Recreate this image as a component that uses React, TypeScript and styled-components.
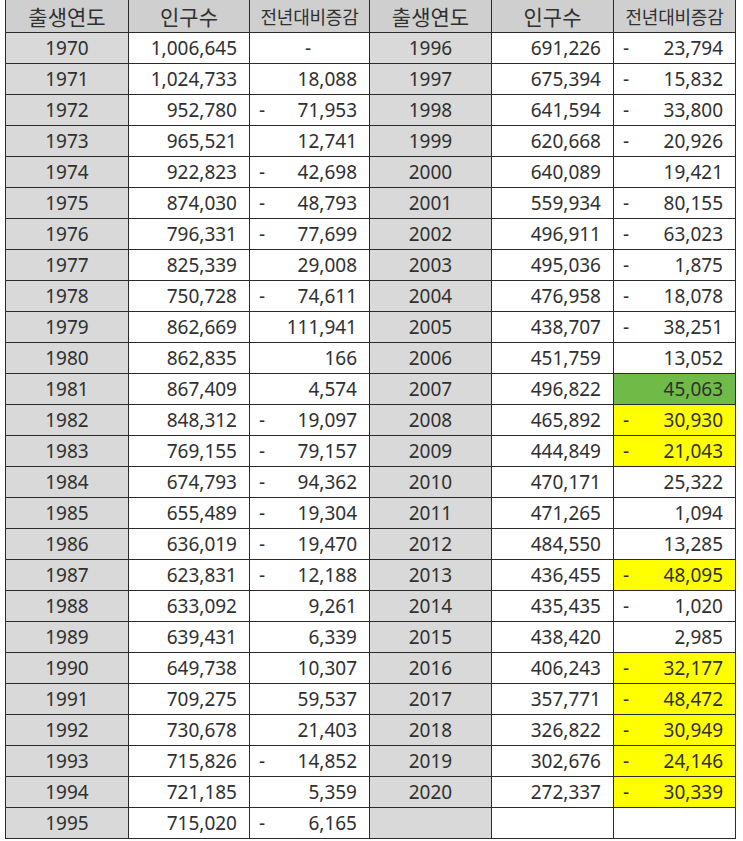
import React from 'react';
import styled, { createGlobalStyle } from 'styled-components';

const GlobalStyle = createGlobalStyle`
  html, body {
    margin: 0;
    padding: 0;
    background: #ffffff;
  }
  body {
    font-family: "Noto Sans", "Noto Sans CJK KR", sans-serif;
    color: #333333;
  }
`;

type Tone = 'none' | 'green' | 'yellow';

type Row = {
  year: number | null;
  pop: string;
  diff: string;
  neg?: boolean;
  tone?: Tone;
  center?: boolean;
};

const r = (year: number | null, pop: string, diff: string, extra: Partial<Row> = {}): Row => ({
  year,
  pop,
  diff: diff.replace('-', ''),
  neg: diff.startsWith('-') && diff.length > 1,
  ...extra,
});

const left: Row[] = [
  r(1970, '1,006,645', '-', { center: true }),
  r(1971, '1,024,733', '18,088'),
  r(1972, '952,780', '-71,953'),
  r(1973, '965,521', '12,741'),
  r(1974, '922,823', '-42,698'),
  r(1975, '874,030', '-48,793'),
  r(1976, '796,331', '-77,699'),
  r(1977, '825,339', '29,008'),
  r(1978, '750,728', '-74,611'),
  r(1979, '862,669', '111,941'),
  r(1980, '862,835', '166'),
  r(1981, '867,409', '4,574'),
  r(1982, '848,312', '-19,097'),
  r(1983, '769,155', '-79,157'),
  r(1984, '674,793', '-94,362'),
  r(1985, '655,489', '-19,304'),
  r(1986, '636,019', '-19,470'),
  r(1987, '623,831', '-12,188'),
  r(1988, '633,092', '9,261'),
  r(1989, '639,431', '6,339'),
  r(1990, '649,738', '10,307'),
  r(1991, '709,275', '59,537'),
  r(1992, '730,678', '21,403'),
  r(1993, '715,826', '-14,852'),
  r(1994, '721,185', '5,359'),
  r(1995, '715,020', '-6,165'),
];

const right: Row[] = [
  r(1996, '691,226', '-23,794'),
  r(1997, '675,394', '-15,832'),
  r(1998, '641,594', '-33,800'),
  r(1999, '620,668', '-20,926'),
  r(2000, '640,089', '19,421'),
  r(2001, '559,934', '-80,155'),
  r(2002, '496,911', '-63,023'),
  r(2003, '495,036', '-1,875'),
  r(2004, '476,958', '-18,078'),
  r(2005, '438,707', '-38,251'),
  r(2006, '451,759', '13,052'),
  r(2007, '496,822', '45,063', { tone: 'green' }),
  r(2008, '465,892', '-30,930', { tone: 'yellow' }),
  r(2009, '444,849', '-21,043', { tone: 'yellow' }),
  r(2010, '470,171', '25,322'),
  r(2011, '471,265', '1,094'),
  r(2012, '484,550', '13,285'),
  r(2013, '436,455', '-48,095', { tone: 'yellow' }),
  r(2014, '435,435', '-1,020'),
  r(2015, '438,420', '2,985'),
  r(2016, '406,243', '-32,177', { tone: 'yellow' }),
  r(2017, '357,771', '-48,472', { tone: 'yellow' }),
  r(2018, '326,822', '-30,949', { tone: 'yellow' }),
  r(2019, '302,676', '-24,146', { tone: 'yellow' }),
  r(2020, '272,337', '-30,339', { tone: 'yellow' }),
  r(null, '', ''),
];

const toneColor: Record<Tone, string> = {
  none: '#ffffff',
  green: '#70bb47',
  yellow: '#ffff00',
};

const Sheet = styled.table`
  margin-left: 5px;
  border-collapse: collapse;
  table-layout: fixed;
  width: 730px;
  font-size: 19px;
  color: #303030;
`;

const Col = styled.col<{ $w: number }>`
  width: ${(p) => p.$w}px;
`;

const HeadCell = styled.th<{ $narrow?: boolean }>`
  height: 32px;
  padding: 0;
  background: #cfcfcf;
  border: 1px solid #2b2b2b;
  border-top: none;
  font-family: "Noto Sans CJK KR", sans-serif;
  font-weight: 400;
  font-size: ${(p) => (p.$narrow ? '18px' : '21px')};
  letter-spacing: ${(p) => (p.$narrow ? '-0.2px' : '0')};
  text-align: center;
  white-space: nowrap;
  overflow: hidden;
  line-height: 30px;
`;

const Cell = styled.td`
  height: 30px;
  padding: 0;
  border: 1px solid #2b2b2b;
  line-height: 30px;
  white-space: nowrap;
`;

const YearCell = styled(Cell)`
  background: #d9d9d9;
  text-align: center;
`;

const NumCell = styled(Cell)`
  background: #ffffff;
  text-align: right;
  padding-right: 12px;
`;

const DiffCell = styled(Cell)<{ $tone: Tone }>`
  background: ${(p) => toneColor[p.$tone]};
`;

const DiffInner = styled.div<{ $center?: boolean }>`
  display: flex;
  justify-content: ${(p) => (p.$center ? 'center' : 'space-between')};
  padding: 0 12px 0 9px;
`;

const Dash = styled.span`
  width: 10px;
`;

const renderHalf = (row: Row) => [
  <YearCell key="y">{row.year ?? ''}</YearCell>,
  <NumCell key="p">{row.pop}</NumCell>,
  <DiffCell key="d" $tone={row.tone ?? 'none'}>
    {row.center ? (
      <DiffInner $center>-</DiffInner>
    ) : (
      <DiffInner>
        <Dash>{row.neg ? '-' : ''}</Dash>
        <span>{row.diff}</span>
      </DiffInner>
    )}
  </DiffCell>,
];

export default function App() {
  return (
    <>
      <GlobalStyle />
      <Sheet>
        <colgroup>
          <Col $w={123} />
          <Col $w={121} />
          <Col $w={120} />
          <Col $w={122} />
          <Col $w={122} />
          <Col $w={122} />
        </colgroup>
        <thead>
          <tr>
            <HeadCell>출생연도</HeadCell>
            <HeadCell>인구수</HeadCell>
            <HeadCell $narrow>전년대비증감</HeadCell>
            <HeadCell>출생연도</HeadCell>
            <HeadCell>인구수</HeadCell>
            <HeadCell $narrow>전년대비증감</HeadCell>
          </tr>
        </thead>
        <tbody>
          {left.map((row, i) => (
            <tr key={i}>
              {renderHalf(row)}
              {renderHalf(right[i])}
            </tr>
          ))}
        </tbody>
      </Sheet>
    </>
  );
}
